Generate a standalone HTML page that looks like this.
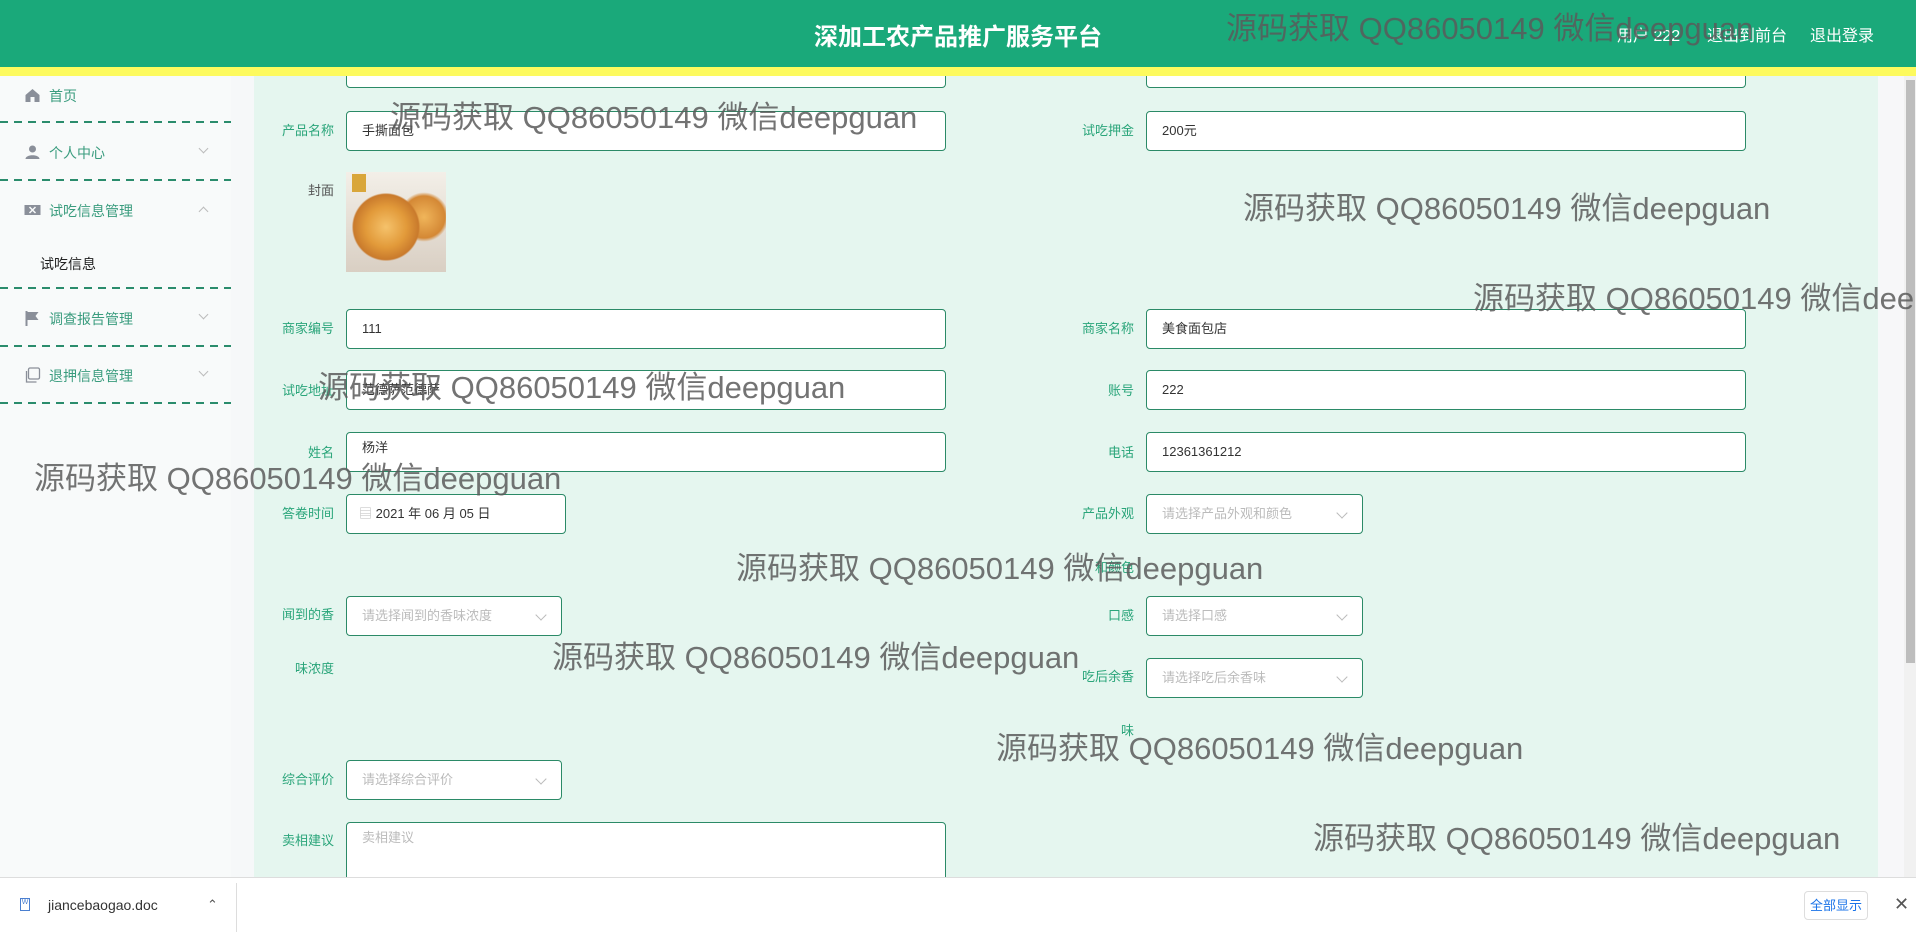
<!DOCTYPE html>
<html><head><meta charset="utf-8"><style>
*{margin:0;padding:0;box-sizing:border-box}
body{width:1916px;height:932px;overflow:hidden;position:relative;background:#f6f8f9;font-family:"Liberation Sans","Noto Sans CJK SC",sans-serif;}
.a{position:absolute}
.hdr{left:0;top:0;width:1916px;height:67px;background:#1aa97a;z-index:5}
.yel{left:0;top:67px;width:1916px;height:9px;background:#fdfa5e;z-index:5}
.title{left:0;width:1916px;top:17px;text-align:center;color:#fff;font-size:24px;font-weight:bold;z-index:6}
.hr{top:22px;color:#fff;font-size:16px;z-index:6}
.side{left:0;top:76px;width:231px;height:801px;background:#f8fafa}
.mi{left:49px;font-size:14px;color:#3a9c7e}
.ic{left:24px;width:17px;height:16px}
.dash{left:0;width:231px;height:2px;background:repeating-linear-gradient(90deg,#2a8c6c 0 8px,transparent 8px 14px)}
.chev{left:200px;width:7px;height:7px;border-right:1px solid #bbb;border-bottom:1px solid #bbb;transform:rotate(45deg)}
.main{left:254px;top:76px;width:1624px;height:801px;background:#e5f6ef}
.lbl{font-size:13px;color:#2aa57a;text-align:right;width:100px;line-height:18px}
.in{background:#fff;border:1px solid #2b8a67;border-radius:4px;height:40px;font-size:13px;color:#333;padding-left:15px;line-height:38px}
.ph{color:#bbb}
.wm{font-size:31px;color:rgba(90,90,90,.85);white-space:nowrap;z-index:10}
.dd::after{content:"";position:absolute;right:16px;top:14px;width:7px;height:7px;border-right:1px solid #bbb;border-bottom:1px solid #bbb;transform:rotate(45deg)}
</style></head><body>
<div class="a hdr"></div><div class="a yel"></div>
<div class="a title">深加工农产品推广服务平台</div>
<div class="a hr" style="left:1617px">用户 222</div>
<div class="a hr" style="left:1707px">退出到前台</div>
<div class="a hr" style="left:1810px">退出登录</div>

<div class="a side"></div>
<svg class="a ic" style="top:87px" viewBox="0 0 16 16"><path d="M1 8 L8 2 L15 8 V15 H10 V10 H6 V15 H1Z" fill="#8a8f99"/></svg>
<div class="a mi" style="top:86px">首页</div>
<div class="a dash" style="top:121px"></div>
<svg class="a ic" style="top:144px" viewBox="0 0 16 16"><circle cx="8" cy="5" r="3.5" fill="#8a8f99"/><path d="M1 15 C1 10 15 10 15 15Z" fill="#8a8f99"/></svg>
<div class="a mi" style="top:143px">个人中心</div><div class="a chev" style="top:145px"></div>
<div class="a dash" style="top:179px"></div>
<svg class="a ic" style="top:202px" viewBox="0 0 16 16"><path d="M0 3 H16 V13 H0Z M6 3 V13" fill="#8a8f99"/><path d="M5 5 L11 11 M11 5 L5 11" stroke="#f8fafa" stroke-width="1.5"/></svg>
<div class="a mi" style="top:201px">试吃信息管理</div><div class="a chev" style="top:208px;transform:rotate(225deg)"></div>
<div class="a mi" style="top:254px;left:40px;color:#222">试吃信息</div>
<div class="a dash" style="top:287px"></div>
<svg class="a ic" style="top:310px" viewBox="0 0 16 16"><path d="M2 1 V16" stroke="#8a8f99" stroke-width="2"/><path d="M3 2 H14 L11 6 L14 10 H3Z" fill="#8a8f99"/></svg>
<div class="a mi" style="top:309px">调查报告管理</div><div class="a chev" style="top:311px"></div>
<div class="a dash" style="top:345px"></div>
<svg class="a ic" style="top:367px" viewBox="0 0 16 16"><rect x="4" y="1" width="11" height="11" rx="1.5" fill="none" stroke="#8a8f99" stroke-width="1.3"/><path d="M2 4 V15 H12" fill="none" stroke="#8a8f99" stroke-width="1.3"/></svg>
<div class="a mi" style="top:366px">退押信息管理</div><div class="a chev" style="top:368px"></div>
<div class="a dash" style="top:402px"></div>

<div class="a main"></div>
<div class="a" style="left:1880px;top:76px;width:24px;height:801px;background:#f7f7f9"></div>
<div class="a" style="left:1904px;top:76px;width:12px;height:801px;background:#f1f1f1"></div>
<div class="a" style="left:1906px;top:80px;width:9px;height:583px;background:#bdbdbd"></div>

<div class="a in" style="left:346px;top:48px;width:600px"></div>
<div class="a in" style="left:1146px;top:48px;width:600px"></div>
<div class="a lbl" style="left:234px;top:122px">产品名称</div>
<div class="a in" style="left:346px;top:111px;width:600px">手撕面包</div>
<div class="a lbl" style="left:234px;top:182px;color:#555">封面</div>
<div class="a" style="left:346px;top:172px;width:100px;height:100px;background:radial-gradient(circle at 40% 55%,#f5c26b 0,#e29a3a 25%,#c97a2c 40%,transparent 42%),radial-gradient(circle at 78% 45%,#f0b55a 0,#d48835 22%,transparent 26%),linear-gradient(#f3efe8,#d9cfc3)"></div>
<div class="a" style="left:352px;top:174px;width:14px;height:18px;background:#d9a63a"></div>
<div class="a lbl" style="left:234px;top:320px">商家编号</div>
<div class="a in" style="left:346px;top:309px;width:600px">111</div>
<div class="a lbl" style="left:234px;top:382px">试吃地址</div>
<div class="a in" style="left:346px;top:370px;width:600px">范德萨范德萨</div>
<div class="a lbl" style="left:234px;top:444px">姓名</div>
<div class="a in" style="left:346px;top:432px;width:600px;line-height:30px">杨洋</div>
<div class="a lbl" style="left:234px;top:505px">答卷时间</div>
<div class="a in" style="left:346px;top:494px;width:220px;padding-left:12px"><span style="color:#bbb">&#9636;</span> 2021 年 06 月 05 日</div>
<div class="a lbl" style="left:234px;top:606px">闻到的香<br><br><br>味浓度</div>
<div class="a in ph dd" style="left:346px;top:596px;width:216px">请选择闻到的香味浓度</div>
<div class="a lbl" style="left:234px;top:771px">综合评价</div>
<div class="a in ph dd" style="left:346px;top:760px;width:216px">请选择综合评价</div>
<div class="a lbl" style="left:234px;top:832px">卖相建议</div>
<div class="a in ph" style="left:346px;top:822px;width:600px;height:70px;line-height:30px">卖相建议</div>

<div class="a lbl" style="left:1034px;top:122px">试吃押金</div>
<div class="a in" style="left:1146px;top:111px;width:600px">200元</div>
<div class="a lbl" style="left:1034px;top:320px">商家名称</div>
<div class="a in" style="left:1146px;top:309px;width:600px">美食面包店</div>
<div class="a lbl" style="left:1034px;top:382px">账号</div>
<div class="a in" style="left:1146px;top:370px;width:600px">222</div>
<div class="a lbl" style="left:1034px;top:444px">电话</div>
<div class="a in" style="left:1146px;top:432px;width:600px">12361361212</div>
<div class="a lbl" style="left:1034px;top:505px">产品外观<br><br><br>和颜色</div>
<div class="a in ph dd" style="left:1146px;top:494px;width:217px">请选择产品外观和颜色</div>
<div class="a lbl" style="left:1034px;top:607px">口感</div>
<div class="a in ph dd" style="left:1146px;top:596px;width:217px">请选择口感</div>
<div class="a lbl" style="left:1034px;top:668px">吃后余香<br><br><br>味</div>
<div class="a in ph dd" style="left:1146px;top:658px;width:217px">请选择吃后余香味</div>

<div class="a wm" style="left:1226px;top:3px">源码获取 QQ86050149 微信deepguan</div>
<div class="a wm" style="left:390px;top:92px">源码获取 QQ86050149 微信deepguan</div>
<div class="a wm" style="left:1243px;top:183px">源码获取 QQ86050149 微信deepguan</div>
<div class="a wm" style="left:1473px;top:273px">源码获取 QQ86050149 微信deepguan</div>
<div class="a wm" style="left:318px;top:362px">源码获取 QQ86050149 微信deepguan</div>
<div class="a wm" style="left:34px;top:453px">源码获取 QQ86050149 微信deepguan</div>
<div class="a wm" style="left:736px;top:543px">源码获取 QQ86050149 微信deepguan</div>
<div class="a wm" style="left:552px;top:632px">源码获取 QQ86050149 微信deepguan</div>
<div class="a wm" style="left:996px;top:723px">源码获取 QQ86050149 微信deepguan</div>
<div class="a wm" style="left:1313px;top:813px">源码获取 QQ86050149 微信deepguan</div>

<div class="a" style="left:0;top:877px;width:1916px;height:55px;background:#fff;border-top:1px solid #ddd;z-index:11"></div>
<div class="a" style="left:20px;top:898px;width:10px;height:13px;border:1px solid #4a7fd0;font-size:7px;color:#4a7fd0;text-align:center;z-index:12">W</div>
<div class="a" style="left:48px;top:897px;font-size:14px;color:#333;z-index:12">jiancebaogao.doc</div>
<div class="a" style="left:207px;top:897px;font-size:13px;color:#555;z-index:12">&#8963;</div>
<div class="a" style="left:236px;top:883px;width:1px;height:49px;background:#ddd;z-index:12"></div>
<div class="a" style="left:1804px;top:891px;width:64px;height:29px;border:1px solid #ddd;border-radius:4px;font-size:13px;color:#1a73e8;text-align:center;line-height:27px;z-index:12">全部显示</div>
<div class="a" style="left:1894px;top:894px;font-size:18px;color:#555;z-index:12">&#10005;</div>
</body></html>
